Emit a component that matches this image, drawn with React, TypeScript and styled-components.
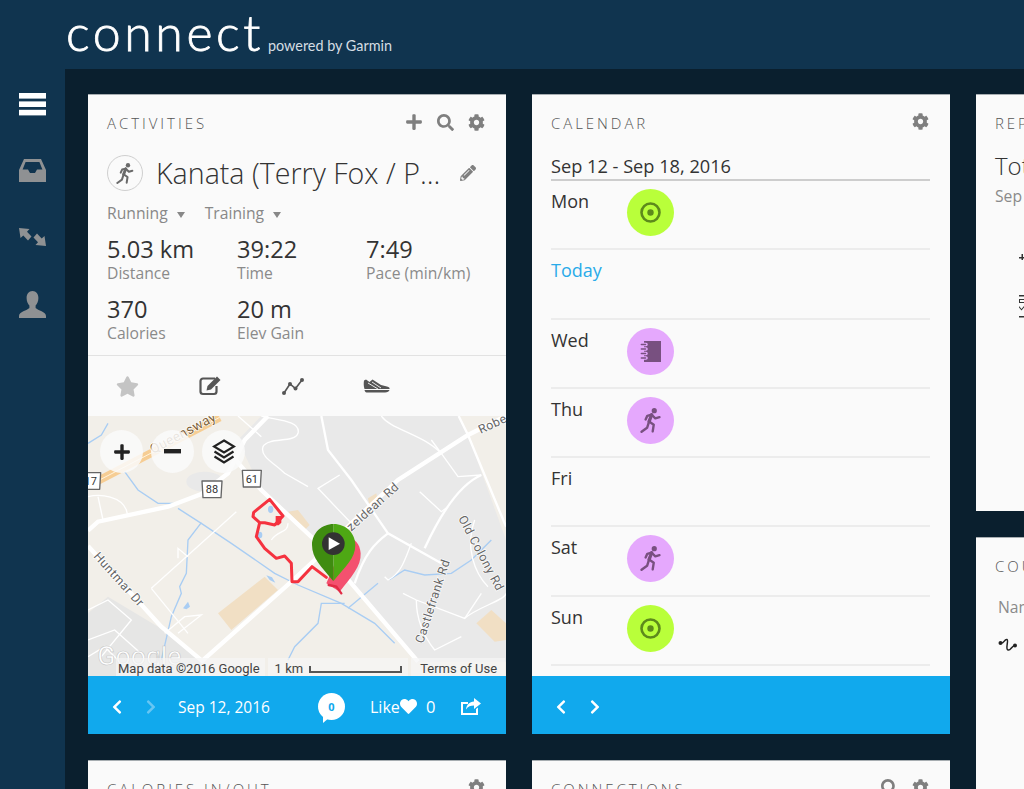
import React from 'react';
import styled, { createGlobalStyle } from 'styled-components';
import {
  FaChevronLeft,
  FaChevronRight,
  FaCog,
  FaHeart,
  FaPencilAlt,
  FaPlus,
  FaSearch,
  FaStar,
} from 'react-icons/fa';

const GlobalStyle = createGlobalStyle`
  html, body {
    margin: 0;
    height: 100%;
    overflow: hidden;
    background: #10344f;
    font-family: "Open Sans", "Liberation Sans", sans-serif;
  }
  * { box-sizing: border-box; }
`;

const Page = styled.div`
  width: 1024px;
  height: 789px;
  overflow: hidden;
  display: flex;
  flex-direction: column;
`;

const Header = styled.header`
  height: 69px;
  flex: none;
  padding-left: 66px;
  display: flex;
  align-items: flex-end;
  gap: 4px;
  background: #10344f;
  color: #fff;
`;

const LogoWord = styled.span`
  font-family: Lato, sans-serif;
  font-weight: 300;
  font-size: 50px;
  line-height: 50px;
  letter-spacing: 3.6px;
  -webkit-text-stroke: 0.8px #fff;
  margin-bottom: 12px;
`;

const LogoSub = styled.span`
  font-family: Lato, sans-serif;
  font-size: 14.4px;
  line-height: 16px;
  color: #d5dde3;
  margin-bottom: 15px;
`;

const Body = styled.div`
  flex: 1;
  display: flex;
  min-height: 0;
`;

const Sidebar = styled.nav`
  width: 65px;
  flex: none;
  padding-top: 2px;
  background: #10344f;
`;

const NavItem = styled.div`
  height: 66.6px;
  display: flex;
  align-items: center;
  justify-content: center;
  color: #8f9193;
`;

const Main = styled.main`
  flex: 1;
  padding: 25px 0 0 23px;
  display: flex;
  gap: 26px;
  overflow: hidden;
  background: #0a1f2e;
`;

const Column = styled.div`
  width: 418px;
  flex: none;
  display: flex;
  flex-direction: column;
  gap: 26px;
`;

const Card = styled.section<{ $height: number }>`
  height: ${(p) => p.$height}px;
  flex: none;
  display: flex;
  flex-direction: column;
  overflow: hidden;
  background: #fafafa;
  border-top: 1px solid #a7adb1;
`;

const CardHead = styled.div`
  height: 57px;
  flex: none;
  padding: 0 21px 0 19px;
  display: flex;
  align-items: flex-start;
  justify-content: space-between;
`;

const CardTitle = styled.h2`
  margin: 18px 0 0;
  font-size: 15px;
  line-height: 20px;
  font-weight: 300;
  letter-spacing: 2.95px;
  color: #555;
  white-space: nowrap;
`;

const HeadIcons = styled.div`
  margin-top: 18px;
  display: flex;
  align-items: center;
  gap: 14px;
  font-size: 17px;
  color: #7f7f7f;

  svg {
    display: block;
  }
`;

const TitleRow = styled.div`
  margin-top: 3px;
  padding: 0 30px 0 19px;
  height: 36px;
  display: flex;
  align-items: center;
  justify-content: space-between;
`;

const RoundIcon = styled.span`
  width: 36px;
  height: 36px;
  flex: none;
  display: flex;
  align-items: center;
  justify-content: center;
  border: 1px solid #cfcfcf;
  border-radius: 50%;
  color: #6a6a6a;
`;

const ActivityName = styled.h1`
  margin: 0 0 0 13px;
  flex: 1;
  font-size: 28.6px;
  line-height: 36px;
  font-weight: 300;
  color: #333;
  white-space: nowrap;
`;

const EditName = styled.span`
  display: flex;
  color: #7f7f7f;
  font-size: 16px;
`;

const Tags = styled.div`
  margin-top: 11px;
  padding-left: 19px;
  height: 22px;
  display: flex;
  gap: 20px;
`;

const Tag = styled.span`
  font-size: 15.7px;
  line-height: 22px;
  color: #888;
  white-space: nowrap;

  &::after {
    content: '';
    display: inline-block;
    margin-left: 9px;
    vertical-align: 1px;
    border-left: 4px solid transparent;
    border-right: 4px solid transparent;
    border-top: 6px solid #888;
  }
`;

const Stats = styled.div`
  margin-top: 12px;
  padding: 0 0 12px 19px;
  display: grid;
  grid-template-columns: 130px 129px 1fr;
  row-gap: 13px;
  border-bottom: 1px solid #e2e2e2;
`;

const StatValue = styled.div`
  font-size: 23.6px;
  line-height: 27px;
  color: #333;
`;

const StatLabel = styled.div`
  font-size: 15.7px;
  line-height: 20px;
  color: #8a8a8a;
  white-space: nowrap;
`;

const ActionBar = styled.div`
  height: 60px;
  flex: none;
  padding-left: 19px;
  display: flex;
  align-items: center;
  gap: 43px;
`;

const ActionSlot = styled.span<{ $muted?: boolean }>`
  width: 40px;
  display: flex;
  justify-content: center;
  font-size: 23px;
  color: ${(p) => (p.$muted ? '#c4c4c4' : '#555')};
`;

const MapBox = styled.div`
  position: relative;
  height: 260px;
  flex: none;
  overflow: hidden;
  background: #f2efe9;

  > svg {
    display: block;
  }
`;

const MapControls = styled.div`
  position: absolute;
  left: 12px;
  top: 14px;
  display: flex;
  gap: 8px;
`;

const MapButton = styled.span`
  width: 43px;
  height: 43px;
  display: flex;
  align-items: center;
  justify-content: center;
  border-radius: 50%;
  background: rgba(250, 250, 250, 0.86);
  color: #222;
`;

const Attribution = styled.div`
  position: absolute;
  left: 28px;
  right: 0;
  bottom: 0;
  height: 18px;
  display: flex;
  gap: 3px;
  font-family: Roboto, sans-serif;
  font-size: 13px;
  color: #444;
`;

const AttrCell = styled.span<{ $pad: string }>`
  display: flex;
  align-items: center;
  gap: 6px;
  padding: ${(p) => p.$pad};
  background: rgba(245, 245, 245, 0.72);
  white-space: nowrap;
`;

const ScaleBar = styled.span`
  width: 93px;
  height: 7px;
  margin-top: 2px;
  border: 2px solid #555;
  border-top: 0;
`;

const CardFoot = styled.footer`
  height: 58px;
  flex: none;
  margin-top: auto;
  padding: 3px 0 0 24px;
  display: flex;
  align-items: center;
  background: #11a9ed;
  color: #fff;
`;

const Chevron = styled.span<{ $dim?: boolean; $gap: number }>`
  width: 10px;
  margin-right: ${(p) => p.$gap}px;
  display: flex;
  justify-content: center;
  font-size: 16px;
  color: ${(p) => (p.$dim ? '#67c6f3' : '#fff')};
`;

const FootDate = styled.span`
  width: 140px;
  font-size: 15.5px;
  white-space: nowrap;
`;

const Bubble = styled.span`
  position: relative;
  width: 27px;
  height: 27px;
  margin-right: 25px;
  display: flex;
  align-items: center;
  justify-content: center;
  border-radius: 50%;
  background: #fff;
  color: #11a9ed;
  font-size: 11px;
  font-weight: 700;

  &::after {
    content: '';
    position: absolute;
    left: 5px;
    bottom: -3px;
    border-top: 6px solid #fff;
    border-right: 7px solid transparent;
  }
`;

const LikeLabel = styled.span`
  font-size: 16px;
  display: flex;
  align-items: center;
  width: 56px;
  white-space: nowrap;

  svg {
    font-size: 17px;
    flex: none;
  }
`;

const LikeCount = styled.span`
  font-size: 16.5px;
  width: 35px;
`;

const Calendar = styled.div`
  padding: 0 20px 0 19px;
`;

const WeekRange = styled.div`
  height: 28px;
  font-size: 18.2px;
  line-height: 26px;
  margin-top: 1px;
  color: #333;
  border-bottom: 2px solid #cdcdcd;
`;

const DayRow = styled.div`
  height: 69.3px;
  padding-top: 8px;
  display: flex;
  align-items: flex-start;
  border-bottom: 2px solid #ececec;
`;

const DayName = styled.span<{ $today?: boolean }>`
  width: 76px;
  flex: none;
  font-size: 18px;
  line-height: 24px;
  color: ${(p) => (p.$today ? '#29abe9' : '#333')};
`;

const DayBadge = styled.span<{ $kind: 'goal' | 'plan' }>`
  width: 47px;
  height: 47px;
  display: flex;
  align-items: center;
  justify-content: center;
  border-radius: 50%;
  background: ${(p) => (p.$kind === 'goal' ? '#b9ff3a' : '#e5a8fd')};
  color: ${(p) => (p.$kind === 'goal' ? '#5d8a1c' : '#785080')};
`;

const ReportTotal = styled.div`
  padding-left: 19px;
  margin-top: -2px;
  font-size: 24px;
  line-height: 32px;
  font-weight: 300;
  color: #333;
  white-space: nowrap;
`;

const ReportRange = styled.div`
  padding-left: 19px;
  margin-top: 4px;
  font-size: 15.7px;
  line-height: 20px;
  color: #8a8a8a;
  white-space: nowrap;
`;

const ChartMarks = styled.div`
  margin: 40px 0 0 40px;
  height: 70px;
`;

const CourseHead = styled.div`
  padding: 2px 0 0 22px;
  font-size: 15.7px;
  line-height: 20px;
  color: #8a8a8a;
  white-space: nowrap;
`;

const CourseRow = styled.div`
  padding: 18px 0 0 22px;
`;

// drawn icons

const MenuIcon = () => (
  <svg width="27" height="23" viewBox="0 0 27 23" fill="#fff">
    <rect width="27" height="5.6" />
    <rect y="8.4" width="27" height="5.6" />
    <rect y="16.8" width="27" height="5.6" />
  </svg>
);

const InboxIcon = () => (
  <svg width="27" height="23" viewBox="0 0 27 23" fill="currentColor">
    <path
      fillRule="evenodd"
      d="M5 0H22L27 11V23H0V11ZM6.6 3L3.6 10.5H9L11 14H16L18 10.5H23.4L20.4 3Z"
    />
  </svg>
);

const SwapIcon = () => (
  <svg width="27" height="18" viewBox="0 0 27 18" fill="currentColor">
    <path d="M0 0L10.5 1L8 3.8L12.5 8.5L9 12.5L4.3 7.5L1.5 10Z" />
    <path d="M27 18L16.5 17L19 14.2L14.5 9.5L18 5.5L22.7 10.5L25.5 8Z" />
  </svg>
);

const UserIcon = () => (
  <svg width="27" height="27" viewBox="0 0 27 27" fill="currentColor">
    <path d="M13.5 0C17.2 0 19.4 3 19.4 7C19.4 10.4 18 13 16.6 14.4V17C18.8 19.4 27 20.6 27 25V27H0V25C0 20.6 8.2 19.4 10.4 17V14.4C9 13 7.6 10.4 7.6 7C7.6 3 9.8 0 13.5 0Z" />
  </svg>
);

const RunnerIcon = ({ size }: { size: number }) => (
  <svg width={size * 0.85} height={size} viewBox="0 0 20 24" fill="none" stroke="currentColor" strokeWidth="2.3" strokeLinejoin="round" strokeLinecap="round">
    <circle cx="13.5" cy="2.6" r="2.5" fill="currentColor" stroke="none" />
    <path d="M11 6.5L8.5 13" strokeWidth="3.2" />
    <path d="M11 6.5L14.5 10L18.5 8.8" />
    <path d="M10.8 6.5L6.8 7.5L5.2 11" />
    <path d="M8.5 13L13 16L12 22.5" />
    <path d="M8.5 13L6.6 19L1.3 22.8" />
  </svg>
);

const NoteEditIcon = () => (
  <svg width="22" height="20" viewBox="0 0 22 20">
    <path
      d="M16 2.5H4A2.5 2.5 0 0 0 1.5 5V15.5A2.5 2.5 0 0 0 4 18H15A2.5 2.5 0 0 0 17.5 15.5V10"
      fill="none"
      stroke="currentColor"
      strokeWidth="2.2"
    />
    <path d="M18 0.5L21.5 4L12 13.5L7.5 14.5L8.5 10Z" fill="currentColor" />
  </svg>
);

const TrendIcon = () => (
  <svg width="22" height="17" viewBox="0 0 22 17" fill="currentColor">
    <path d="M2 15L8 6L13.5 10.5L20 2" fill="none" stroke="currentColor" strokeWidth="1.6" />
    <circle cx="2" cy="15" r="2" />
    <circle cx="8" cy="6" r="2" />
    <circle cx="13.5" cy="10.5" r="2" />
    <circle cx="20" cy="2" r="2" />
  </svg>
);

const ShoeIcon = () => (
  <svg width="27" height="14" viewBox="0 0 27 14" fill="currentColor">
    <path d="M1 1.5L3 0.5L6.5 3L9.5 0.5L18 6L24 7.5C26 8 27 9 26.5 10H1.5C0.5 7 0.6 4 1 1.5Z" />
    <path d="M1.5 11H26.5C26 12.6 24.5 13.5 22 13.5H3.5C2.5 13.5 1.8 12.5 1.5 11Z" />
    <path d="M5 4L15 10M9 3L18 9" stroke="#fafafa" strokeWidth="0.9" fill="none" />
  </svg>
);

const ShareIcon = () => (
  <svg width="20" height="17" viewBox="0 0 20 17" fill="#fff">
    <path d="M0 4H7V6H2V15H15V11L17 9.5V17H0Z" />
    <path d="M13 0L20 5.5L13 11V7.6C9.5 7.6 7 8.5 5 11.5C5.4 7 8.4 3.6 13 3.4Z" />
  </svg>
);

const LayersIcon = () => (
  <svg width="24" height="25" viewBox="0 0 24 25" fill="none" stroke="#222" strokeWidth="2.2">
    <path d="M12 1.5L22 7.5L12 13.5L2 7.5Z" />
    <path d="M2.5 12.5L12 18.5L21.5 12.5" />
    <path d="M2.5 17.5L12 23.5L21.5 17.5" />
  </svg>
);

const TargetIcon = () => (
  <svg width="21" height="21" viewBox="0 0 21 21">
    <circle cx="10.5" cy="10.5" r="9" fill="none" stroke="currentColor" strokeWidth="2.6" />
    <circle cx="10.5" cy="10.5" r="3.2" fill="currentColor" />
  </svg>
);

const NotebookIcon = () => (
  <svg width="21" height="21" viewBox="0 0 21 21" fill="currentColor">
    <rect x="4" y="0" width="17" height="21" />
    <path
      d="M1 3.5H6M1 8H6M1 12.5H6M1 17H6"
      stroke="#e5a8fd"
      strokeWidth="3.6"
      strokeLinecap="round"
    />
    <path d="M1.4 3.5H5.5M1.4 8H5.5M1.4 12.5H5.5M1.4 17H5.5" stroke="currentColor" strokeWidth="1.6" strokeLinecap="round" />
  </svg>
);

const Squiggle = () => (
  <svg width="20" height="14" viewBox="0 0 20 14" fill="none" stroke="#222" strokeWidth="1.5">
    <circle cx="2.5" cy="5" r="2" fill="#222" stroke="none" />
    <circle cx="17" cy="7.5" r="2" fill="#222" stroke="none" />
    <path d="M3 5C6 6 6 1 9 1.5C11 2 7 11 10 12C13 13 13 8 17 7.5" />
  </svg>
);

const ChartBits = () => (
  <svg width="8" height="72" viewBox="0 0 8 72" fill="#333">
    <rect x="3" y="11" width="5" height="1.5" />
    <rect x="5.5" y="8" width="1.5" height="6" />
    <rect x="3" y="49" width="5" height="1.5" />
    <path d="M3 53H8V54H4V56H8V57H3Z" />
    <path d="M3 60L5.5 63L8 60V61.5L5.5 64.5L3 61.5Z" />
    <rect x="3" y="70" width="5" height="1.5" />
  </svg>
);

const ROADS_MAJOR = [
  'M340 965L610 725L680 660L790 550L930 420L1140 285L1254 228',
  'M430 345L520 450L680 600L790 730L990 965',
  'M0 572L30 545L240 500L340 462L420 400L470 300L540 228',
  'M0 618L220 860L345 965',
];

const ROADS_MID = [
  'M1112 228L1140 285L1254 560',
  'M700 228L720 330L790 420L900 580L1060 670',
  'M900 580C860 610 830 640 800 730',
  'M1180 405C1100 440 1040 560 1010 625',
];

const ROADS_MINOR = [
  'M520 228C560 240 640 240 630 280C620 310 540 290 525 320C515 350 560 370 590 400L660 440',
  'M450 228L520 290',
  'M755 405L690 445L790 550',
  'M880 228C910 270 1000 280 1060 340L1110 410L1180 405',
  'M1060 340L1030 300',
  'M995 455L1060 515L1080 500',
  'M970 610C950 660 940 700 900 720L890 710M945 760L985 780L1130 835L1180 760',
  'M985 780C985 830 1000 880 1040 930L1120 890',
  'M1130 835C1170 800 1254 780 1254 760',
  'M1160 540C1130 620 1160 700 1200 740',
  'M445 515L190 745M190 745L300 880',
  'M0 470C40 460 100 470 115 510L120 530',
  'M30 470L45 540',
  'M300 650L270 625V655',
  'M550 600C570 570 600 580 600 550',
  'M0 810L60 780L130 840L40 950',
  'M0 900L80 870L170 950',
  'M0 950L50 920L110 980',
  'M230 880L290 830L340 825L270 880',
];

const WATER = [
  'M270 505L340 550L430 610L560 700L630 735L760 790L860 850L920 910',
  'M110 395L150 450L210 490L260 490',
  'M340 548L300 600L295 700L275 740L280 760L250 830L220 960',
  'M870 730L780 805',
  'M770 790L700 790L690 850L620 920L600 960',
  'M905 718L950 690L1010 705L1090 700L1150 660L1210 600',
  'M0 310L40 285L60 250',
];

const ROUTE =
  'M515 548L495 530L497 517L545 478L585 528L560 555L530 548L515 548L505 590L530 625L565 655L590 648L610 670L612 725L630 725L672 680L715 712';

const RoadSign = ({ x, y, w, label }: { x: number; y: number; w: number; label: string }) => (
  <g>
    <path
      d={`M${x} ${y}H${x + w}L${x + w - 3} ${y + 50}H${x + 3}Z`}
      fill="#fff"
      stroke="#666"
      strokeWidth="4"
      strokeLinejoin="round"
    />
    <text x={x + w / 2} y={y + 37} textAnchor="middle" fontSize="33" fontFamily="Roboto, sans-serif" fill="#333">
      {label}
    </text>
  </g>
);

const MapLabel = ({ x, y, rot, color = '#666', size = 37, children }: { x: number; y: number; rot: number; color?: string; size?: number; children: string }) => (
  <text
    x={x}
    y={y}
    transform={`rotate(${rot} ${x} ${y})`}
    fontSize={size}
    letterSpacing="1.5"
    fontFamily="Roboto, sans-serif"
    fill={color}
    stroke="#fff"
    strokeWidth="4"
    paintOrder="stroke"
  >
    {children}
  </text>
);

const MapArt = () => (
  <svg width="418" height="260" viewBox="0 228 1254 780">
    <rect y="228" width="1254" height="780" fill="#f2efe9" />
    <path d="M450 300L520 228H1112L1140 285L930 420L790 550L680 600L520 450Z" fill="#e9e9e9" />
    <path d="M760 690L790 550L930 420L1140 285L1254 600V965H990Z" fill="#e9e9e9" />
    <path d="M0 820L60 770L210 860L340 965V1008H0Z" fill="#e6e6e5" />
    <ellipse cx="350" cy="425" rx="55" ry="30" fill="#e9e9e9" />
    <path d="M390 820L530 710L570 750L430 870Z" fill="#f1dfc4" />
    <path d="M600 515L630 510L665 555L650 570Z" fill="#f1dfc4" />
    <path d="M1165 850L1210 810L1254 850V900L1220 905Z" fill="#f1dfc4" />
    <path d="M840 475L865 460L870 490L845 500Z" fill="#f1dfc4" />

    {WATER.map((d) => (
      <path key={d} d={d} fill="none" stroke="#a9cdf3" strokeWidth="4" />
    ))}
    <ellipse cx="548" cy="508" rx="8" ry="11" fill="#a9cdf3" />
    <ellipse cx="515" cy="585" rx="8" ry="10" fill="#a9cdf3" />
    <path d="M535 706L552 712L562 728L545 720Z" fill="#a9cdf3" />
    <path d="M285 805L300 785L306 800L295 808Z" fill="#a9cdf3" />

    {ROADS_MINOR.map((d) => (
      <path key={d} d={d} fill="none" stroke="#fff" strokeWidth="4" />
    ))}
    {ROADS_MID.map((d) => (
      <path key={d} d={d} fill="none" stroke="#fff" strokeWidth="7" />
    ))}
    {ROADS_MAJOR.map((d) => (
      <path key={d} d={d} fill="none" stroke="#fff" strokeWidth="13" />
    ))}

    <path d="M0 438L395 232" fill="none" stroke="#f6cd94" strokeWidth="24" />
    <path d="M0 438L395 232" fill="none" stroke="#fff3dc" strokeWidth="3" />

    <RoadSign x={463} y={391} w={57} label="61" />
    <RoadSign x={342} y={423} w={60} label="88" />
    <RoadSign x={-22} y={398} w={60} label="17" />

    <MapLabel x={195} y={342} rot={-28} color="#7d5f38" size={40}>Queensway</MapLabel>
    <MapLabel x={15} y={650} rot={48}>Huntmar Dr</MapLabel>
    <MapLabel x={790} y={575} rot={-42}>zeldean Rd</MapLabel>
    <MapLabel x={1110} y={535} rot={62}>Old Colony Rd</MapLabel>
    <MapLabel x={1005} y={912} rot={-72}>Castlefrank Rd</MapLabel>
    <MapLabel x={1178} y={282} rot={-25}>Robertson</MapLabel>

    <path d={ROUTE} fill="none" stroke="#f5323f" strokeWidth="9" strokeLinejoin="round" strokeLinecap="round" />
    <path d="M563 528H580V548L572 556H563Z" fill="#f5323f" />

    <path d="M755 755C790 710 820 680 818 640C816 610 800 595 775 590L715 730Z" fill="#f4516f" />
    <path d="M735 722C700 680 672 655 672 615C672 580 700 552 737 552V722Z" fill="#3f8c10" />
    <path d="M737 722C772 680 802 655 802 615C802 580 774 552 737 552Z" fill="#4ea814" />
    <circle cx="736" cy="611" r="34" fill="#333" />
    <path d="M722 592L756 611L722 630Z" fill="#fff" />
    <path d="M722 735L745 740L760 760" fill="none" stroke="#e22b45" strokeWidth="7" strokeLinecap="round" />

    <text x="28" y="975" fontSize="80" fontFamily="Roboto, sans-serif" fill="#fff" stroke="#aaa" strokeOpacity="0.6" strokeWidth="2">
      Google
    </text>
  </svg>
);

const STATS = [
  { value: '5.03 km', label: 'Distance' },
  { value: '39:22', label: 'Time' },
  { value: '7:49', label: 'Pace (min/km)' },
  { value: '370', label: 'Calories' },
  { value: '20 m', label: 'Elev Gain' },
];

const DAYS: { name: string; kind?: 'goal' | 'plan'; icon?: 'target' | 'note' | 'run'; today?: boolean }[] = [
  { name: 'Mon', kind: 'goal', icon: 'target' },
  { name: 'Today', today: true },
  { name: 'Wed', kind: 'plan', icon: 'note' },
  { name: 'Thu', kind: 'plan', icon: 'run' },
  { name: 'Fri' },
  { name: 'Sat', kind: 'plan', icon: 'run' },
  { name: 'Sun', kind: 'goal', icon: 'target' },
];

const dayIcon = (icon?: string) => {
  if (icon === 'target') return <TargetIcon />;
  if (icon === 'note') return <NotebookIcon />;
  return <RunnerIcon size={25} />;
};

export default function App() {
  return (
    <Page>
      <GlobalStyle />
      <Header>
        <LogoWord>connect</LogoWord>
        <LogoSub>powered by Garmin</LogoSub>
      </Header>
      <Body>
        <Sidebar>
          <NavItem><MenuIcon /></NavItem>
          <NavItem><InboxIcon /></NavItem>
          <NavItem><SwapIcon /></NavItem>
          <NavItem><UserIcon /></NavItem>
        </Sidebar>
        <Main>
          <Column>
            <Card $height={640}>
              <CardHead>
                <CardTitle>ACTIVITIES</CardTitle>
                <HeadIcons>
                  <FaPlus size={18} />
                  <FaSearch size={17} />
                  <FaCog size={17} />
                </HeadIcons>
              </CardHead>
              <TitleRow>
                <RoundIcon><RunnerIcon size={21} /></RoundIcon>
                <ActivityName>Kanata (Terry Fox / P...</ActivityName>
                <EditName><FaPencilAlt /></EditName>
              </TitleRow>
              <Tags>
                <Tag>Running</Tag>
                <Tag>Training</Tag>
              </Tags>
              <Stats>
                {STATS.map((s) => (
                  <div key={s.label}>
                    <StatValue>{s.value}</StatValue>
                    <StatLabel>{s.label}</StatLabel>
                  </div>
                ))}
              </Stats>
              <ActionBar>
                <ActionSlot $muted><FaStar /></ActionSlot>
                <ActionSlot><NoteEditIcon /></ActionSlot>
                <ActionSlot><TrendIcon /></ActionSlot>
                <ActionSlot><ShoeIcon /></ActionSlot>
              </ActionBar>
              <MapBox>
                <MapArt />
                <MapControls>
                  <MapButton><FaPlus size={18} /></MapButton>
                  <MapButton>
                    <svg width="17" height="5" viewBox="0 0 17 5" fill="#222"><rect width="17" height="4.4" /></svg>
                  </MapButton>
                  <MapButton><LayersIcon /></MapButton>
                </MapControls>
                <Attribution>
                  <AttrCell $pad="3px 5px 0 2px">Map data ©2016 Google</AttrCell>
                  <AttrCell $pad="3px 6px 0 7px">1 km <ScaleBar /></AttrCell>
                  <AttrCell $pad="3px 8px 0 9px">Terms of Use</AttrCell>
                </Attribution>
              </MapBox>
              <CardFoot>
                <Chevron $gap={24}><FaChevronLeft /></Chevron>
                <Chevron $dim $gap={22}><FaChevronRight /></Chevron>
                <FootDate>Sep 12, 2016</FootDate>
                <Bubble>0</Bubble>
                <LikeLabel>Like<FaHeart /></LikeLabel>
                <LikeCount>0</LikeCount>
                <ShareIcon />
              </CardFoot>
            </Card>
            <Card $height={200}>
              <CardHead>
                <CardTitle>CALORIES IN/OUT</CardTitle>
                <HeadIcons><FaCog size={17} /></HeadIcons>
              </CardHead>
            </Card>
          </Column>
          <Column>
            <Card $height={640}>
              <CardHead>
                <CardTitle>CALENDAR</CardTitle>
                <HeadIcons><FaCog size={17} /></HeadIcons>
              </CardHead>
              <Calendar>
                <WeekRange>Sep 12 - Sep 18, 2016</WeekRange>
                {DAYS.map((d) => (
                  <DayRow key={d.name}>
                    <DayName $today={d.today}>{d.name}</DayName>
                    {d.kind && <DayBadge $kind={d.kind}>{dayIcon(d.icon)}</DayBadge>}
                  </DayRow>
                ))}
              </Calendar>
              <CardFoot>
                <Chevron $gap={24}><FaChevronLeft /></Chevron>
                <Chevron $gap={0}><FaChevronRight /></Chevron>
              </CardFoot>
            </Card>
            <Card $height={200}>
              <CardHead>
                <CardTitle>CONNECTIONS</CardTitle>
                <HeadIcons>
                  <FaSearch size={17} />
                  <FaCog size={17} />
                </HeadIcons>
              </CardHead>
            </Card>
          </Column>
          <Column>
            <Card $height={417}>
              <CardHead>
                <CardTitle>REPORTS</CardTitle>
              </CardHead>
              <ReportTotal>Total Distance</ReportTotal>
              <ReportRange>Sep 12 - Sep 18, 2016</ReportRange>
              <ChartMarks><ChartBits /></ChartMarks>
            </Card>
            <Card $height={300}>
              <CardHead>
                <CardTitle>COURSES</CardTitle>
              </CardHead>
              <CourseHead>Name</CourseHead>
              <CourseRow><Squiggle /></CourseRow>
            </Card>
          </Column>
        </Main>
      </Body>
    </Page>
  );
}
